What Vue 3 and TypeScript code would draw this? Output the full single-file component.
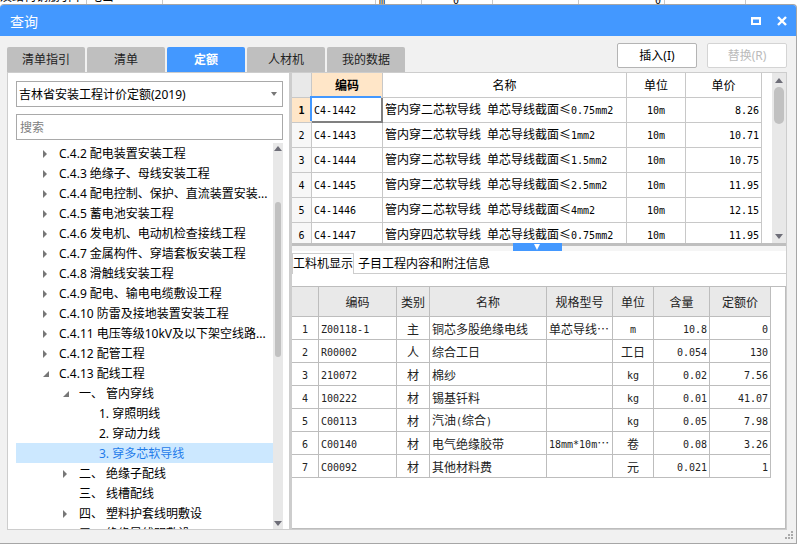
<script setup lang="ts">
import { ref } from 'vue'

interface Run { text: string; latin: boolean }
interface TreeNode { label: string; level: number; state: 'closed' | 'open' | 'leaf' }
type QuotaRow = [code: string, name: string, unit: string, price: string]
type ResourceRow = [code: string, kind: string, name: string, spec: string, unit: string, amount: string, price: string]

const tabs = ['清单指引', '清单', '定额', '人材机', '我的数据']
const activeTab = ref('定额')
const library = ref('吉林省安装工程计价定额(2019)')
const keyword = ref('')
const selectedNode = ref('3. 穿多芯软导线')
const detailTabs = ['工料机显示', '子目工程内容和附注信息']
const detailTab = ref('工料机显示')
const selectedRow = ref(0)

const nodes: TreeNode[] = [
  { label: 'C.4.2 配电装置安装工程', level: 1, state: 'closed' },
  { label: 'C.4.3 绝缘子、母线安装工程', level: 1, state: 'closed' },
  { label: 'C.4.4 配电控制、保护、直流装置安装...', level: 1, state: 'closed' },
  { label: 'C.4.5 蓄电池安装工程', level: 1, state: 'closed' },
  { label: 'C.4.6 发电机、电动机检查接线工程', level: 1, state: 'closed' },
  { label: 'C.4.7 金属构件、穿墙套板安装工程', level: 1, state: 'closed' },
  { label: 'C.4.8 滑触线安装工程', level: 1, state: 'closed' },
  { label: 'C.4.9 配电、输电电缆敷设工程', level: 1, state: 'closed' },
  { label: 'C.4.10 防雷及接地装置安装工程', level: 1, state: 'closed' },
  { label: 'C.4.11 电压等级10kV及以下架空线路...', level: 1, state: 'closed' },
  { label: 'C.4.12 配管工程', level: 1, state: 'closed' },
  { label: 'C.4.13 配线工程', level: 1, state: 'open' },
  { label: '一、 管内穿线', level: 2, state: 'open' },
  { label: '1. 穿照明线', level: 3, state: 'leaf' },
  { label: '2. 穿动力线', level: 3, state: 'leaf' },
  { label: '3. 穿多芯软导线', level: 3, state: 'leaf' },
  { label: '二、 绝缘子配线', level: 2, state: 'closed' },
  { label: '三、 线槽配线', level: 2, state: 'leaf' },
  { label: '四、 塑料护套线明敷设', level: 2, state: 'closed' },
  { label: '五、 绝缘导线明敷设', level: 2, state: 'closed' },
]

const quotas: QuotaRow[] = [
  ['C4-1442', '管内穿二芯软导线 单芯导线截面≤0.75mm2', '10m', '8.26'],
  ['C4-1443', '管内穿二芯软导线 单芯导线截面≤1mm2', '10m', '10.71'],
  ['C4-1444', '管内穿二芯软导线 单芯导线截面≤1.5mm2', '10m', '10.75'],
  ['C4-1445', '管内穿二芯软导线 单芯导线截面≤2.5mm2', '10m', '11.95'],
  ['C4-1446', '管内穿二芯软导线 单芯导线截面≤4mm2', '10m', '12.15'],
  ['C4-1447', '管内穿四芯软导线 单芯导线截面≤0.75mm2', '10m', '11.95'],
]

const resources: ResourceRow[] = [
  ['Z00118-1', '主', '铜芯多股绝缘电线', '单芯导线…', 'm', '10.8', '0'],
  ['R00002', '人', '综合工日', '', '工日', '0.054', '130'],
  ['210072', '材', '棉纱', '', 'kg', '0.02', '7.56'],
  ['100222', '材', '锡基钎料', '', 'kg', '0.01', '41.07'],
  ['C00113', '材', '汽油(综合)', '', 'kg', '0.05', '7.98'],
  ['C00140', '材', '电气绝缘胶带', '18mm*10m…', '卷', '0.08', '3.26'],
  ['C00092', '材', '其他材料费', '', '元', '0.021', '1'],
]
const resourceAlign = ['left', 'center', 'left', 'left', 'center', 'right', 'right']
const quotaAlign = ['left', 'left', 'center', 'right']

// Half-width characters are set in a monospaced face, half as wide as a Chinese character.
function runs(text: string): Run[] {
  return (text.match(/[\x20-\x7e]+|[^\x20-\x7e]+/g) ?? []).map((t) => ({
    text: t,
    latin: /^[\x20-\x7e]/.test(t),
  }))
}
</script>

<template>
  <div class="screen" lang="zh-CN">
    <div class="sheet" aria-hidden="true">
      <span class="c1">及结构钢筋引下</span><span class="c2">电当</span><span class="c3"></span>
      <span class="c4 half">m</span><span class="c5 half">0</span><span class="c6"></span>
      <span class="c7 half">0</span><span class="c8"></span>
    </div>
    <section class="dialog" aria-label="查询">
      <header class="titlebar">
        <h1>查询</h1>
        <button class="winbtn" type="button" aria-label="最大化">
          <svg width="12" height="12" viewBox="0 0 12 12"><path d="M1 2h10v8H1zM3 4.5v3.5h6V4.5z" fill="#fff" fill-rule="evenodd" /></svg>
        </button>
        <button class="winbtn" type="button" aria-label="关闭">
          <svg width="12" height="12" viewBox="0 0 12 12"><path d="M2 2l8 8M10 2l-8 8" stroke="#fff" stroke-width="2.4" /></svg>
        </button>
      </header>

      <div class="toolbar">
        <nav class="tabs">
          <button
            v-for="t in tabs" :key="t" type="button"
            :class="['tab', { active: t === activeTab }]" @click="activeTab = t"
          >{{ t }}</button>
        </nav>
        <div class="actions">
          <button type="button" class="action">插入(I)</button>
          <button type="button" class="action" disabled>替换(R)</button>
        </div>
      </div>

      <div class="content">
        <aside class="side">
          <div class="combo">
            <select v-model="library" aria-label="定额库">
              <option>吉林省安装工程计价定额(2019)</option>
            </select>
            <svg width="6" height="4" viewBox="0 0 6 4"><path d="M0 0h6L3 4z" fill="#777" /></svg>
          </div>
          <input v-model="keyword" class="search" type="text" placeholder="搜索" aria-label="搜索">
          <div class="treebox">
            <ul class="tree">
              <li
                v-for="n in nodes" :key="n.label"
                :class="['level' + n.level, { selected: n.label === selectedNode }]"
                @click="selectedNode = n.label"
              >
                <span class="marker">
                  <svg v-if="n.state === 'closed'" width="4" height="8" viewBox="0 0 4 8"><path d="M0 0l4 4-4 4z" fill="#777" /></svg>
                  <svg v-else-if="n.state === 'open'" width="6" height="6" viewBox="0 0 6 6"><path d="M6 0v6H0z" fill="#777" /></svg>
                </span>{{ n.label }}
              </li>
            </ul>
            <div class="scroll tree-scroll">
              <svg width="8" height="5" viewBox="0 0 8 5"><path d="M0 5h8L4 0z" fill="#6e6e78" /></svg>
              <div class="rail"><i class="thumb"></i></div>
              <svg width="8" height="5" viewBox="0 0 8 5"><path d="M0 0h8L4 5z" fill="#6e6e78" /></svg>
            </div>
          </div>
        </aside>

        <main class="main">
          <div class="upper">
            <div class="grid-view">
              <table class="grid quota">
                <colgroup><col class="q0"><col class="q1"><col class="q2"><col class="q3"><col class="q4"></colgroup>
                <thead>
                  <tr><th class="num"></th><th class="current">编码</th><th>名称</th><th>单位</th><th>单价</th></tr>
                </thead>
                <tbody>
                  <tr v-for="(row, i) in quotas" :key="row[0]" :class="{ picked: i === selectedRow }" @click="selectedRow = i">
                    <th class="num"><span class="latin">{{ i + 1 }}</span></th>
                    <td v-for="(cell, c) in row" :key="c" :class="quotaAlign[c]">
                      <span v-for="(r, k) in runs(cell)" :key="k" :class="{ latin: r.latin }">{{ r.text }}</span>
                    </td>
                  </tr>
                </tbody>
              </table>
            </div>
            <div class="scroll grid-scroll">
              <svg width="8" height="5" viewBox="0 0 8 5"><path d="M0 5h8L4 0z" fill="#6e6e78" /></svg>
              <div class="rail"><i class="thumb"></i></div>
              <svg width="8" height="5" viewBox="0 0 8 5"><path d="M0 0h8L4 5z" fill="#6e6e78" /></svg>
            </div>
          </div>

          <div class="splitter">
            <button type="button" aria-label="收起">
              <svg width="6" height="6" viewBox="0 0 6 6"><path d="M0 0h6L3 6z" fill="#fff" /></svg>
            </button>
          </div>

          <nav class="detail-tabs">
            <button
              v-for="t in detailTabs" :key="t" type="button"
              :class="{ active: t === detailTab }" @click="detailTab = t"
            >{{ t }}</button>
          </nav>

          <div class="lower">
            <div class="frame">
              <table class="grid resource">
                <colgroup>
                  <col class="r0"><col class="r1"><col class="r2"><col class="r3"><col class="r4"><col class="r5"><col class="r6"><col class="r7">
                </colgroup>
                <thead>
                  <tr><th></th><th>编码</th><th>类别</th><th>名称</th><th>规格型号</th><th>单位</th><th>含量</th><th>定额价</th></tr>
                </thead>
                <tbody>
                  <tr v-for="(row, i) in resources" :key="row[0]">
                    <th><span class="latin">{{ i + 1 }}</span></th>
                    <td v-for="(cell, c) in row" :key="c" :class="resourceAlign[c]">
                      <span v-for="(r, k) in runs(cell)" :key="k" :class="{ latin: r.latin }">{{ r.text }}</span>
                    </td>
                  </tr>
                </tbody>
              </table>
            </div>
          </div>
        </main>
      </div>

      <footer class="status">
        <svg width="8" height="8" viewBox="0 0 8 8">
          <path d="M6 0h2v2H6zM3 3h2v2H3zM6 3h2v2H6zM0 6h2v2H0zM3 6h2v2H3zM6 6h2v2H6z" fill="#aaa" />
        </svg>
      </footer>
    </section>
  </div>
</template>

<style>
body {
  margin: 0;
  background: #fff;
}
</style>

<style scoped>
* {
  box-sizing: border-box;
}

.screen {
  display: flex;
  flex-direction: column;
  height: 100vh;
  padding-bottom: 4px;
  overflow: hidden;
  font: 12px/18px "Noto Sans", "Noto Sans CJK SC", sans-serif;
  color: #000;
}

button,
input,
select {
  margin: 0;
  padding: 0;
  border: 0;
  font: inherit;
  color: inherit;
}

svg {
  display: block;
  flex: none;
}

/* Worksheet behind the dialog */
.sheet {
  display: flex;
  flex: none;
  height: 4px;
  overflow: hidden;
}

.sheet span {
  flex: none;
  display: flex;
  align-items: flex-end;
  height: 4px;
  padding-left: 3px;
  border-right: 1px solid #c8c8c8;
  line-height: 14px;
  white-space: nowrap;
}

.sheet .half {
  font-family: "DejaVu Sans Mono", monospace;
  font-size: 10px;
  line-height: 6px;
}

.sheet .c1 { width: 87px; padding-left: 0; }
.sheet .c2 { width: 76px; }
.sheet .c3 { width: 213px; }
.sheet .c4 { width: 46px; }
.sheet .c5 { width: 71px; padding-left: 31px; }
.sheet .c6 { width: 86px; }
.sheet .c7 { width: 86px; padding-left: 76px; }
.sheet .c8 { width: 81px; }

.dialog {
  display: flex;
  flex: 1;
  flex-direction: column;
  min-height: 0;
  border: solid #a6a6a6;
  border-width: 1px 1px 1px 0;
  border-radius: 4px 4px 0 0;
  background: #f1f1f1;
  overflow: hidden;
}

.titlebar {
  display: flex;
  flex: none;
  align-items: center;
  gap: 14px;
  height: 31px;
  padding: 0 8px 0 10px;
  background: #4398ff;
  color: #fff;
}

.titlebar h1 {
  flex: 1;
  margin: 0;
  padding-top: 2px;
  font-size: 14px;
  font-weight: 400;
}

.winbtn {
  background: none;
}

.toolbar {
  display: flex;
  flex: none;
  justify-content: space-between;
  height: 36px;
  padding: 0 9px 0 7px;
}

.tabs {
  display: flex;
  align-items: flex-end;
  gap: 2px;
}

.tab {
  width: 78px;
  height: 25px;
  border-radius: 2px 2px 0 0;
  background: #bfbfbf;
  color: #222;
}

.tab.active {
  background: #4398ff;
  color: #fff;
  font-weight: 700;
}

.actions {
  display: flex;
  gap: 10px;
  padding-top: 7px;
}

.action {
  width: 80px;
  height: 25px;
  border: 1px solid #b4b4b4;
  border-radius: 2px;
  background: #fff;
}

.action:disabled {
  border-color: #d4d4d4;
  color: #bbb;
}

.content {
  display: flex;
  flex: 1;
  min-height: 0;
  padding: 0 9px 0 7px;
}

.side {
  display: flex;
  flex: none;
  flex-direction: column;
  width: 283px;
  padding: 8px 6px 0 8px;
  border: 1px solid #cdcdcd;
  background: #fff;
}

.combo {
  display: flex;
  flex: none;
  align-items: center;
  height: 26px;
  padding: 0 5px 0 2px;
  border: 1px solid #a9a9a9;
}

.combo select {
  flex: 1;
  min-width: 0;
  height: 24px;
  padding-top: 2px;
  background: none;
  appearance: none;
}

.search {
  flex: none;
  width: 100%;
  height: 26px;
  margin: 7px 0 3px;
  padding: 0 3px;
  border: 1px solid #a9a9a9;
}

.search::placeholder {
  color: #808080;
  opacity: 1;
}

.treebox {
  display: flex;
  flex: 1;
  min-height: 0;
}

.tree {
  flex: 1;
  min-width: 0;
  margin: 0;
  padding: 0;
  overflow: hidden;
  list-style: none;
}

.tree li {
  display: flex;
  align-items: center;
  height: 20px;
  padding-top: 2px;
  line-height: 18px;
  white-space: nowrap;
}

.tree .marker {
  flex: none;
  width: 16px;
}

.tree .level1 { padding-left: 27px; }
.tree .level2 { padding-left: 47px; }
.tree .level3 { padding-left: 67px; }

.tree .selected {
  background: #cce8ff;
  color: #1f7bea;
}

.scroll {
  display: flex;
  flex: none;
  flex-direction: column;
  align-items: center;
  background: #e8e8e8;
}

.rail {
  flex: 1;
}

.thumb {
  display: block;
  border-radius: 5px;
  background: #c1c1c1;
}

.tree-scroll {
  width: 10px;
  padding: 3px 0;
}

.tree-scroll .thumb {
  width: 6px;
  height: 155px;
  margin-top: 51px;
}

.main {
  display: flex;
  flex: 1;
  flex-direction: column;
  min-width: 0;
  border: solid #cdcdcd;
  border-width: 1px 1px 1px 2px;
  background: #fff;
}

.upper {
  display: flex;
  flex: none;
  height: 170px;
}

.grid-view {
  flex: 1;
  min-width: 0;
  padding-right: 10px;
  overflow: hidden;
}

.grid {
  width: 100%;
  border-collapse: separate;
  border-spacing: 0;
  table-layout: fixed;
  font-family: "Noto Sans CJK SC", sans-serif;
  line-height: 16px;
}

.grid th,
.grid td {
  padding: 0 2px;
  border: solid #c8c8c8;
  border-width: 0 1px 1px 0;
  font-weight: 400;
  text-align: center;
  white-space: pre;
  overflow: hidden;
}

.grid .left { text-align: left; }
.grid .right { text-align: right; }

.latin {
  font-family: "DejaVu Sans Mono", monospace;
  font-size: 10px;
}

.quota tr { height: 25px; }
.quota .q0 { width: 20px; }
.quota .q1 { width: 71px; }
.quota .q3 { width: 59px; }
.quota .q4 { width: 76px; }

.quota .num { background: #f7f7f7; }
.quota thead .num { background: #e9e9e9; }

.quota thead .current {
  background: #ffe6c8;
  font-weight: 700;
}

.quota .picked .num {
  background: #ffe6c8;
}

.quota .picked .num .latin {
  font-weight: 700;
}

.quota .picked .num + td {
  border-color: #808080;
  box-shadow: -2px -2px #4398ff, inset -1px -1px #808080;
}

.grid-scroll {
  width: 14px;
  padding: 5px 0 4px;
}

.grid-scroll .thumb {
  width: 10px;
  height: 37px;
  margin-top: 4px;
}

.splitter {
  display: flex;
  flex: none;
  justify-content: center;
  height: 8px;
  padding-right: 4px;
  border-top: 3px solid #bfbfbf;
  background: #f5f5f5;
}

.splitter button {
  display: flex;
  align-items: center;
  justify-content: center;
  width: 49px;
  height: 8px;
  margin-top: -3px;
  background: #4398ff;
}

.detail-tabs {
  display: flex;
  flex: none;
  gap: 1px;
  height: 23px;
  padding-top: 2px;
  border-bottom: 1px solid #cdcdcd;
}

.detail-tabs button {
  height: 21px;
  padding: 0 3px;
  background: none;
}

.detail-tabs .active {
  padding: 0;
  border: solid #cdcdcd;
  border-width: 1px 1px 0;
  background: #fff;
}

.lower {
  display: flex;
  flex: 1;
  min-height: 0;
  padding-top: 12px;
}

.frame {
  flex: 1;
  min-width: 0;
  padding-right: 14px;
  border: 1px solid #bdbdbd;
  border-left: 0;
  overflow: hidden;
}

.resource { color: #222; }
.resource tr { height: 23px; }
.resource thead tr { height: 30px; }
.resource thead th { background: #e9e9e9; }

.resource th,
.resource td {
  border-color: #bdbdbd;
}

.resource tbody td,
.resource tbody th {
  padding-top: 2px;
}

.resource .r0 { width: 27px; }
.resource .r1 { width: 78px; }
.resource .r2 { width: 33px; }
.resource .r4 { width: 66px; }
.resource .r5 { width: 41px; }
.resource .r6 { width: 56px; }
.resource .r7 { width: 61px; }

.status {
  display: flex;
  flex: none;
  justify-content: flex-end;
  height: 13px;
  padding: 1px 3px 0 0;
}
</style>
